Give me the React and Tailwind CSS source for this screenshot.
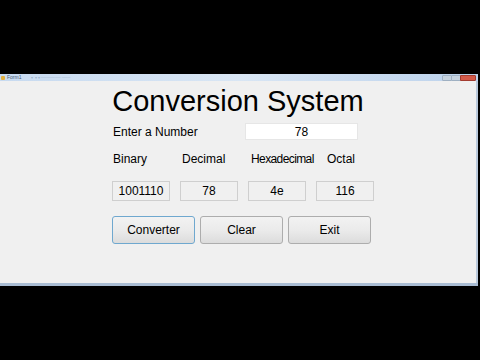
import React from 'react';

const font = { fontFamily: '"Liberation Sans", Arial, sans-serif' };

const OutBox = ({ value }) => (
    <div className="h-[20px] border border-[#cfcfcf] bg-[#f0f0f0] flex items-center justify-center text-[12px] text-black">
        {value}
    </div>
);

const Btn = ({ label, focused }) => (
    <button
        className={`w-[83px] h-[28px] rounded-[3px] border text-[12px] text-black bg-gradient-to-b from-[#f2f2f2] via-[#ebebeb] to-[#dcdcdc] ${
            focused ? 'border-[#6fa8cf]' : 'border-[#adadad]'
        }`}
    >
        {label}
    </button>
);

const App = () => {
    return (
        <div className="w-[480px] h-[360px] bg-black overflow-hidden" style={font}>
            <div className="h-[74px]" />
            <div className="w-[478px] flex flex-col">
                {/* title bar */}
                <div className="h-[7px] flex items-center justify-between bg-gradient-to-r from-[#c7daf0] via-[#d9e6f4] to-[#bcd2ec] pr-[2px]">
                    <div className="flex items-center gap-[2px] pl-[1px]">
                        <div className="w-[4px] h-[4px] bg-[#e0b040] rounded-[1px]" />
                        <span className="text-[5px] leading-none text-[#4a5a70]">Form1</span>
                        <span className="ml-[8px] text-[4px] leading-none text-[#9fb4cc]">▾ ▾ ▾ ─────── ───</span>
                    </div>
                    <div className="flex items-center">
                        <div className="w-[10px] h-[6px] bg-[#c6d2de] border border-[#9fb0c2] rounded-l-[1px]" />
                        <div className="w-[8px] h-[6px] bg-[#c6d2de] border-y border-[#9fb0c2]" />
                        <div className="w-[16px] h-[6px] bg-[#d45a4a] border border-[#a33c30] rounded-r-[1px]" />
                    </div>
                </div>
                {/* client area */}
                <div className="h-[202px] bg-[#f0f0f0] border-r-2 border-[#b9c9dc] flex flex-col">
                    <div className="mt-[6px] text-center text-[29px] leading-[29px] text-black">
                        Conversion System
                    </div>
                    <div className="mt-[7px] pl-[113px] flex items-center h-[17px]">
                        <span className="w-[132px] text-[12px] text-black">Enter a Number</span>
                        <div className="w-[113px] h-[17px] bg-white border border-[#e6e6e6] flex items-center justify-center text-[12px] text-black">
                            78
                        </div>
                    </div>
                    <div className="mt-[10px] pl-[112px] grid grid-cols-[58px_58px_58px_58px] gap-x-[10px] h-[16px] items-center text-[12px] text-black whitespace-nowrap">
                        <span className="pl-[1px]">Binary</span>
                        <span className="pl-[2px]">Decimal</span>
                        <span className="pl-[3px] tracking-[-0.6px]">Hexadecimal</span>
                        <span className="pl-[11px]">Octal</span>
                    </div>
                    <div className="mt-[15px] pl-[112px] grid grid-cols-[58px_58px_58px_58px] gap-x-[10px]">
                        <OutBox value="1001110" />
                        <OutBox value="78" />
                        <OutBox value="4e" />
                        <OutBox value="116" />
                    </div>
                    <div className="mt-[15px] pl-[112px] flex gap-[5px]">
                        <Btn label="Converter" focused />
                        <Btn label="Clear" />
                        <Btn label="Exit" />
                    </div>
                </div>
                <div className="h-[3px] bg-[#a9bcd3]" />
            </div>
        </div>
    );
};

export default App;
